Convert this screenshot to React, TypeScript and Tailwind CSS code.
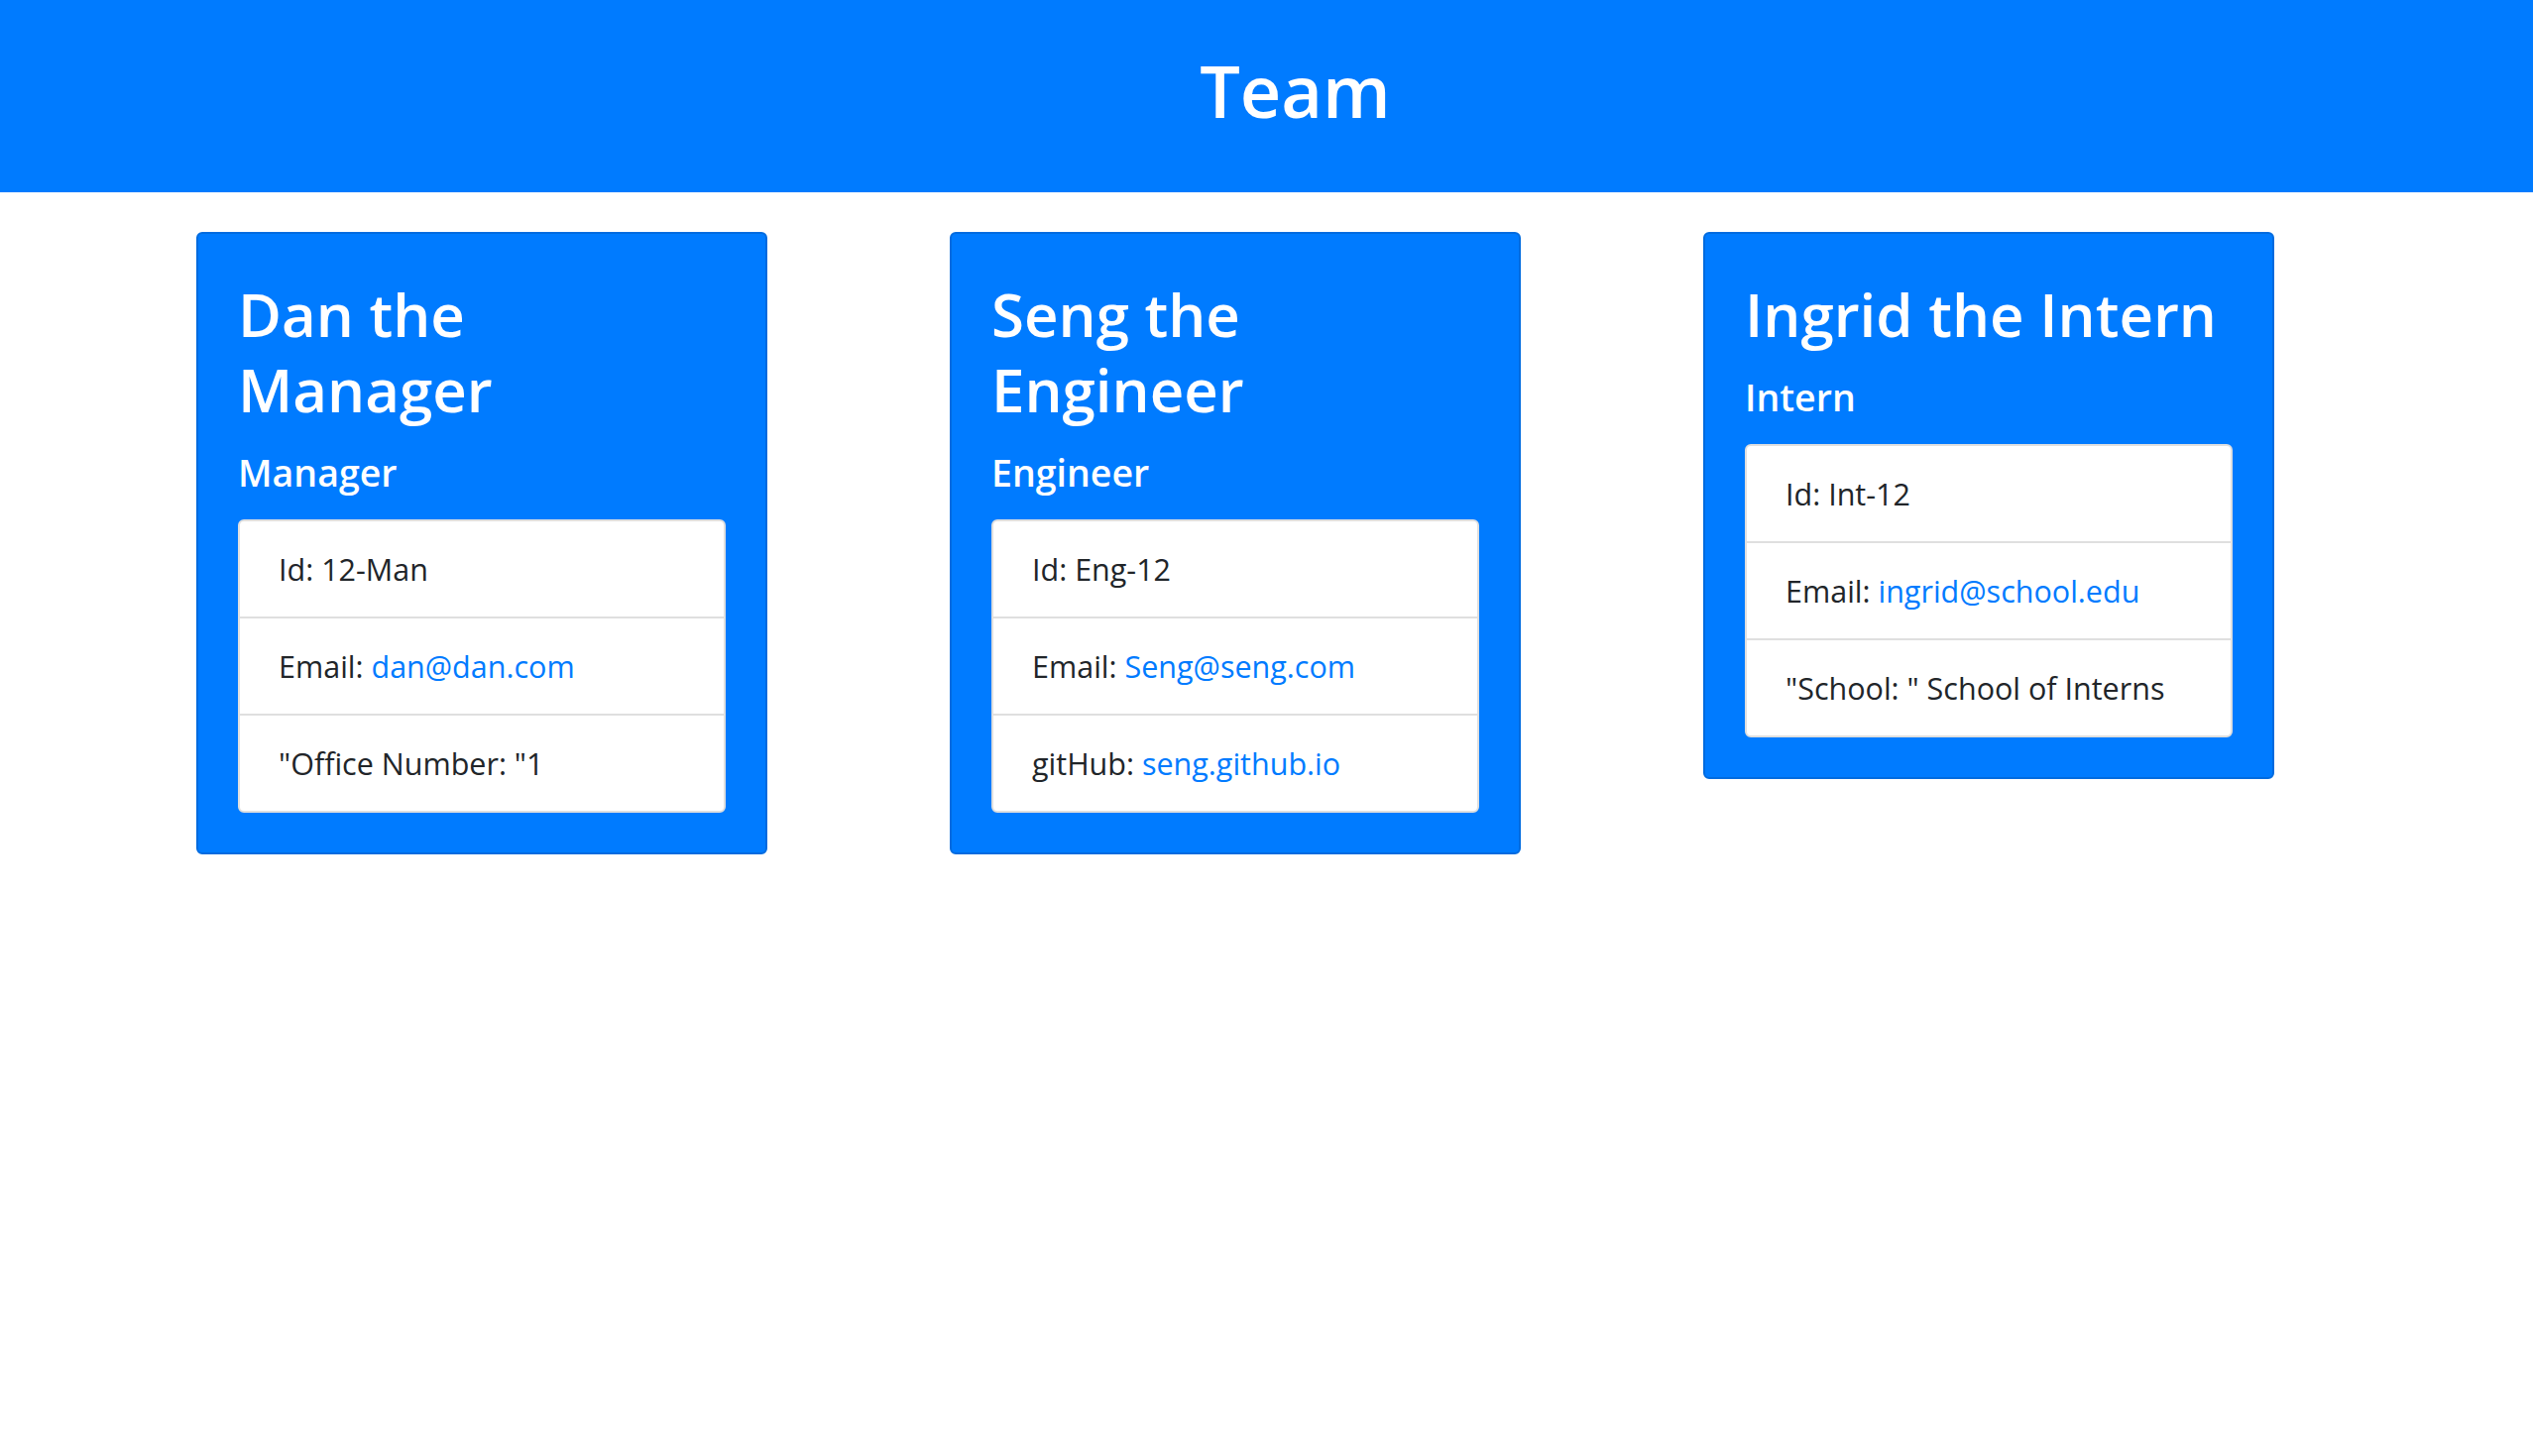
import React from "react";

type Row = { label: string; value: string; link?: boolean };
type Member = { lines: string[]; role: string; rows: Row[] };

const members: Member[] = [
  {
    lines: ["Dan the", "Manager"],
    role: "Manager",
    rows: [
      { label: "Id: ", value: "12-Man" },
      { label: "Email: ", value: "dan@dan.com", link: true },
      { label: "\"Office Number: \"", value: "1" },
    ],
  },
  {
    lines: ["Seng the", "Engineer"],
    role: "Engineer",
    rows: [
      { label: "Id: ", value: "Eng-12" },
      { label: "Email: ", value: "Seng@seng.com", link: true },
      { label: "gitHub: ", value: "seng.github.io", link: true },
    ],
  },
  {
    lines: ["Ingrid the Intern"],
    role: "Intern",
    rows: [
      { label: "Id: ", value: "Int-12" },
      { label: "Email: ", value: "ingrid@school.edu", link: true },
      { label: "\"School: \" ", value: "School of Interns" },
    ],
  },
];

function Card({ m }: { m: Member }) {
  return (
    <div className="w-[576px] shrink-0 rounded-[6px] border-2 border-[#006bdf] bg-[#007bff] px-[40px] pb-[40px] pt-[40px] text-white">
      <h2 className="mt-[3px] text-[60px] font-semibold leading-[76px] whitespace-nowrap">
        {m.lines.map((l) => (
          <span key={l} className="block">
            {l}
          </span>
        ))}
      </h2>
      <h3 className="mt-[24px] text-[37.5px] font-semibold leading-[44px]">{m.role}</h3>
      <ul className="mt-[25px] overflow-hidden rounded-[6px] border-2 border-[#dfdfdf] bg-white text-[#212529]">
        {m.rows.map((r, i) => (
          <li
            key={i}
            className={
              i === 0
                ? "pl-[39px] pr-[30px] py-[25px] text-[30.5px] leading-[46px] whitespace-nowrap"
                : "border-t-2 border-[#dfdfdf] pl-[39px] pr-[30px] py-[25px] text-[30.5px] leading-[46px] whitespace-nowrap"
            }
          >
            {r.label}
            {r.link ? (
              <a href="#" className="text-[#007bff]">
                {r.value}
              </a>
            ) : (
              r.value
            )}
          </li>
        ))}
      </ul>
    </div>
  );
}

export default function App() {
  return (
    <div className="min-h-[1469px] w-full bg-white font-['Open_Sans',sans-serif]">
      <header className="flex h-[194px] justify-center bg-[#007bff]">
        <h1 className="ml-[58px] pt-[47px] text-[72px] font-semibold leading-[88px] text-white">Team</h1>
      </header>
      <main className="mt-[40px] flex items-start gap-[184px] pl-[198px]">
        {members.map((m) => (
          <Card key={m.role} m={m} />
        ))}
      </main>
    </div>
  );
}
